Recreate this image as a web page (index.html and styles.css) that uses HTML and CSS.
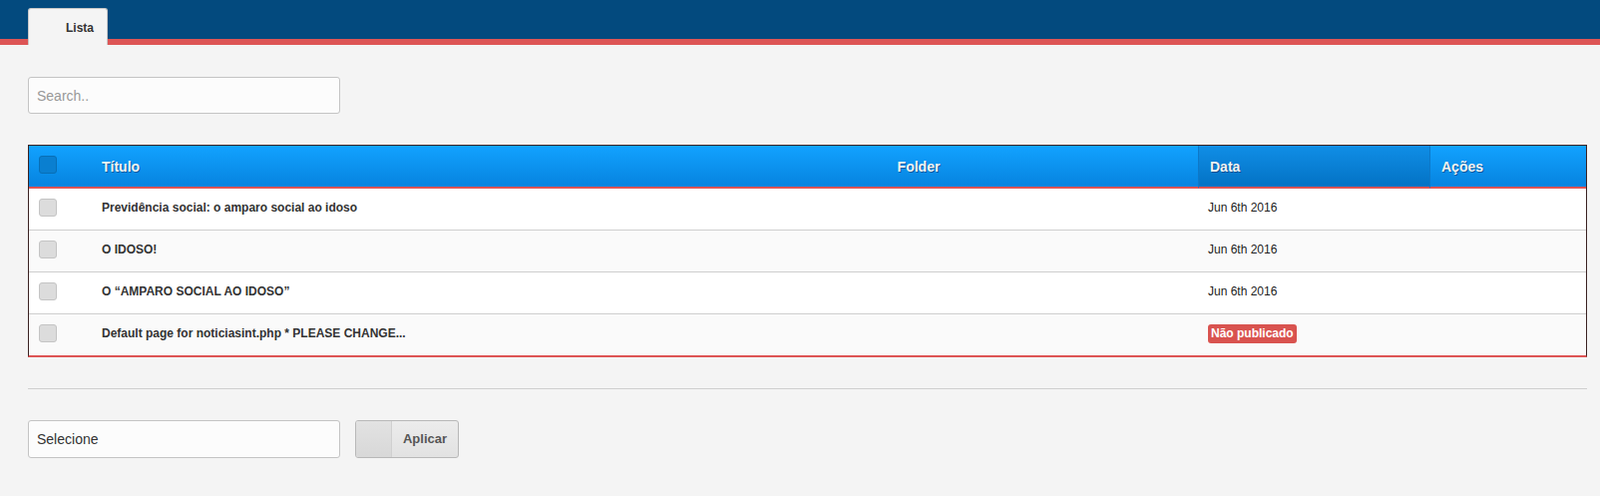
FILE: index.html
```html
<!DOCTYPE html>
<html lang="pt">
<head>
<meta charset="utf-8">
<title>Lista</title>
<link rel="stylesheet" href="styles.css">
</head>
<body>
<header class="topbar">
  <div class="tab">Lista</div>
</header>
<main class="content">
  <div class="search-row">
    <input class="field" type="text" placeholder="Search..">
  </div>
  <table class="grid">
    <colgroup>
      <col class="c-check">
      <col class="c-title">
      <col class="c-folder">
      <col class="c-date">
      <col class="c-actions">
    </colgroup>
    <thead>
      <tr>
        <th class="cell-check"><span class="box box-head"></span></th>
        <th>Título</th>
        <th class="center">Folder</th>
        <th class="sorted">Data</th>
        <th>Ações</th>
      </tr>
    </thead>
    <tbody>
      <tr>
        <td class="cell-check"><span class="box"></span></td>
        <td class="title">Previdência social: o amparo social ao idoso</td>
        <td></td>
        <td class="date">Jun 6th 2016</td>
        <td></td>
      </tr>
      <tr class="alt">
        <td class="cell-check"><span class="box"></span></td>
        <td class="title">O IDOSO!</td>
        <td></td>
        <td class="date">Jun 6th 2016</td>
        <td></td>
      </tr>
      <tr>
        <td class="cell-check"><span class="box"></span></td>
        <td class="title">O “AMPARO SOCIAL AO IDOSO”</td>
        <td></td>
        <td class="date">Jun 6th 2016</td>
        <td></td>
      </tr>
      <tr class="alt last">
        <td class="cell-check"><span class="box"></span></td>
        <td class="title">Default page for noticiasint.php * PLEASE CHANGE...</td>
        <td></td>
        <td class="date"><span class="badge">Não publicado</span></td>
        <td></td>
      </tr>
    </tbody>
  </table>
  <hr class="divider">
  <div class="actions-row">
    <div class="field select">Selecione</div>
    <button class="btn" type="button"><span class="btn-side"></span><span class="btn-label">Aplicar</span></button>
  </div>
</main>
</body>
</html>
```

FILE: styles.css
```css
* { box-sizing: border-box; }

body {
  margin: 0;
  background: #f4f4f4;
  font-family: "Liberation Sans", Arial, sans-serif;
  color: #333;
}

.topbar {
  height: 45px;
  background: #034a7e;
  border-bottom: 6px solid #dd5555;
  display: flex;
  align-items: flex-end;
  padding-left: 28px;
}

.tab {
  width: 80px;
  height: 37px;
  margin-bottom: -6px;
  background: #f4f4f4;
  border: 1px solid #c8c8c8;
  border-bottom: none;
  border-radius: 3px 3px 0 0;
  font-size: 12px;
  font-weight: bold;
  color: #333;
  padding: 12px 0 0 37px;
}

.content {
  padding: 32px 13px 0 28px;
}

.search-row { margin-bottom: 31px; }

.field {
  display: block;
  width: 313px;
  height: 37px;
  background: #fcfcfc;
  border: 1px solid #c4c4c4;
  border-radius: 3px;
  font-family: "Liberation Sans", Arial, sans-serif;
  font-size: 14px;
  color: #333;
  padding: 0 8px;
  outline: none;
}

.field::placeholder { color: #999; }

.grid {
  width: 1563px;
  border-collapse: separate;
  border-spacing: 0;
  border: 1px solid #3a2222;
  border-bottom: 2px solid #dd5555;
  background: #fff;
}

.c-check { width: 62px; }
.c-title { width: 550px; }
.c-folder { width: 560px; }
.c-date { width: 233px; }
.c-actions { width: auto; }

.grid th {
  height: 43px;
  background: linear-gradient(#12a2ff, #0683df);
  border-bottom: 2px solid #dd5555;
  color: #f2f2f2;
  font-size: 14px;
  font-weight: bold;
  text-align: left;
  padding: 0 11px;
  text-shadow: 1px 1px 0 rgba(0, 40, 90, 0.55);
}

.grid th.center { text-align: center; }

.grid th.sorted {
  background: linear-gradient(#108ee6, #0372c4);
  border-left: 1px solid #0d78c8;
  border-right: 1px solid #0d78c8;
}

.grid .cell-check { padding: 0 0 3px 10px; }

.grid td {
  height: 42px;
  border-bottom: 1px solid #cfcfcf;
  font-size: 12px;
  padding: 0 11px 3px;
  vertical-align: middle;
}

.grid tr.last td { border-bottom: none; height: 41px; }

.grid tr.alt td { background: #fafafa; }

.grid td.title {
  font-weight: bold;
  color: #333;
}

.grid td.date {
  color: #222;
  padding-left: 10px;
}

.box {
  display: block;
  width: 18px;
  height: 18px;
  border-radius: 3px;
  background: #dcdcdc;
  border: 1px solid #c4c4c4;
}

.box-head {
  background: #0a7fd0;
  border-color: #086fb6;
}

.badge {
  display: inline-block;
  background: #d9534f;
  color: #fff;
  font-weight: bold;
  font-size: 12px;
  padding: 3px 3px;
  border-radius: 3px;
  line-height: 13px;
}

.divider {
  margin: 31px 0 0;
  border: none;
  border-top: 1px solid #cfcfcf;
  width: 1563px;
}

.actions-row {
  display: flex;
  gap: 15px;
  margin-top: 31px;
}

.select {
  height: 38px;
  line-height: 36px;
}

.btn {
  display: flex;
  width: 104px;
  height: 38px;
  padding: 0;
  border: 1px solid #b8b8b8;
  border-radius: 3px;
  background: linear-gradient(#ececec, #e2e2e2);
  font-family: "Liberation Sans", Arial, sans-serif;
  overflow: hidden;
}

.btn-side {
  width: 36px;
  height: 100%;
  background: linear-gradient(#e2e2e2, #d8d8d8);
  border-right: 1px solid #d0d0d0;
}

.btn-label {
  flex: 1;
  font-size: 13px;
  font-weight: bold;
  color: #555;
  line-height: 36px;
  text-align: center;
}
```
